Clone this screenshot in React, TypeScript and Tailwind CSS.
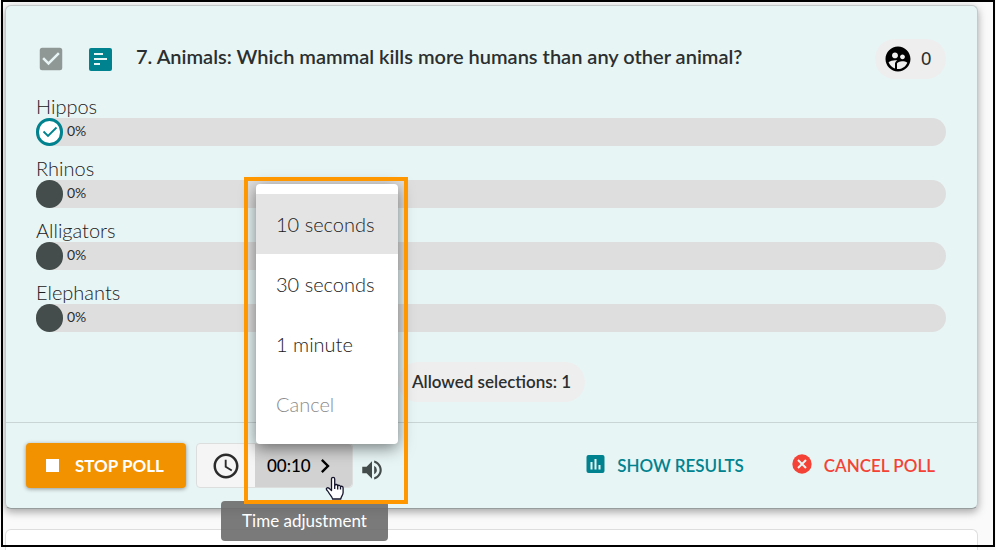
import { useState } from "react";
import {
  MdAccessTime,
  MdCheckBox,
  MdNavigateNext,
  MdSupervisedUserCircle,
  MdVolumeUp,
} from "react-icons/md";

const answers = ["Hippos", "Rhinos", "Alligators", "Elephants"];
const times = ["10 seconds", "30 seconds", "1 minute"];

function PollIcon() {
  return (
    <svg className="ml-[22px]" width="24" height="23" viewBox="0 0 24 23">
      <rect x="1" y="0" width="23" height="23" rx="2" fill="#00838f" />
      <path
        d="M6 6h9M6 11h13M6 16h6"
        stroke="#e8f5f5"
        strokeWidth="2"
        fill="none"
      />
    </svg>
  );
}

function ChartIcon() {
  return (
    <svg className="mr-3 mb-1" width="19" height="18" viewBox="0 0 19 18">
      <rect x="0.500" width="18" height="18" rx="2" fill="#00838f" />
      <path
        d="M5.500 7v7.500M9.500 4v10.500M13.500 10v4.500"
        stroke="#e8f5f5"
        strokeWidth="2"
      />
    </svg>
  );
}

function CancelIcon() {
  return (
    <svg className="mr-3 mb-1" width="20" height="20" viewBox="0 0 20 20">
      <circle cx="10" cy="10" r="9.700" fill="#f44336" />
      <path
        d="M6 6l8 8M14 6l-8 8"
        stroke="#e8f5f5"
        strokeWidth="2"
      />
    </svg>
  );
}

function HandCursor() {
  return (
    <svg width="20" height="25" viewBox="0 0 20 25">
      <path
        d="M6.500 14.500V3c0-2.200 3.200-2.200 3.200 0v6.500c.5-1.500 2.800-1.300 3 .4.700-1 2.600-.8 2.800.8.800-.8 2.600-.4 2.600 1.300v4.500c0 3-2 3.500-2.300 6.500H7.500c-.2-2.400-2.500-4-3.700-6.300-.7-1.400-1.800-2.200-2.300-3-.8-1.500 1-2.500 2.300-1.600z"
        fill="white"
        stroke="#14142b"
        strokeWidth="1.300"
        strokeLinejoin="round"
      />
      <path
        d="M9.700 9.500v3.500M12.700 10v3.500M15.500 11v2.500"
        stroke="#14142b"
        strokeWidth="1.300"
      />
    </svg>
  );
}

export default function App() {
  const [answer, setAnswer] = useState("Hippos");
  const [picked, setPicked] = useState(true);

  return (
    <div className="relative bg-[#fafafa] pt-[5px] pr-[18px] pl-[5px] font-[Lato,sans-serif] text-[#2b2f2f]">
      <main className="rounded-md border border-[#c4c9c9] border-b-[#979c9c] bg-[#e8f5f5] shadow-[0_3px_8px_rgba(0,0,0,0.35)]">
        <header className="flex items-center pt-[33px] pr-[31px] pl-[30px]">
          <label className="flex w-[30px] justify-center text-[#909896]">
            <input
              type="checkbox"
              aria-label="Select poll"
              checked={picked}
              onChange={() => setPicked(!picked)}
              className="sr-only"
            />
            <MdCheckBox size={30} />
          </label>
          <PollIcon />
          <h1 className="ml-6 flex-1 pb-1.5 text-xl leading-6 font-semibold">
            7. Animals: Which mammal kills more humans than any other animal?
          </h1>
          <div className="flex h-10 items-center gap-2 rounded-full bg-[#eee] pr-[15px] pl-2">
            <MdSupervisedUserCircle size={30} color="black" />
            <span className="text-[17px] font-medium">0</span>
          </div>
        </header>

        <section className="mt-[11px] pr-[31px] pl-[30px]">
          {answers.map((name) => (
            <label key={name} className="mb-1.5 block">
              <span className="block h-7 pt-1 text-xl leading-6 font-light text-[#1c2020]">
                {name}
              </span>
              <span className="flex h-7 items-center gap-1 rounded-full bg-[#dedede]">
                <span
                  className={
                    answer === name
                      ? "flex h-7 w-[27px] items-center justify-center rounded-full border-[3px] border-[#00838f] bg-white"
                      : "h-7 w-[27px] rounded-full bg-[#444d4b]"
                  }
                >
                  <input
                    type="radio"
                    name="answer"
                    checked={answer === name}
                    onChange={() => setAnswer(name)}
                    className="sr-only"
                  />
                  {answer === name && (
                    <svg width="16" height="12" viewBox="0 0 16 12">
                      <path
                        d="M1.500 5.500l4.500 4.500 8.500-8.500"
                        stroke="#00838f"
                        strokeWidth="1.800"
                        fill="none"
                      />
                    </svg>
                  )}
                </span>
                <span className="pb-0.5 text-sm">0%</span>
              </span>
            </label>
          ))}
        </section>

        <div className="mt-[30px] flex justify-center">
          <p className="rounded-full bg-[#eee] px-3.5 py-2 text-[17px] leading-6 font-semibold">
            Allowed selections: 1
          </p>
        </div>

        <footer className="mt-5 flex items-center border-t border-[#c9d4d4] px-5 py-5">
          <button className="flex h-[45px] w-40 items-center rounded bg-[#f39200] pl-5 text-[17px] font-bold text-white shadow-[0_1px_4px_rgba(0,0,0,0.4)]">
            <span className="mr-4 size-[13px] bg-white" />
            STOP POLL
          </button>
          <div className="ml-2.5 flex h-[45px] rounded border border-[#dcdede] bg-[#f5f5f5]">
            <button
              aria-label="Timer"
              className="flex w-[58px] items-center justify-center"
            >
              <MdAccessTime size={30} color="#2b2b2b" />
            </button>
            <div className="relative">
              <button className="flex h-full w-[97px] items-center rounded-r bg-[#d2d2d2] pl-3 text-[17px] font-medium text-black">
                00:10
                <MdNavigateNext size={28} />
              </button>
              <div
                role="menu"
                className="absolute bottom-full left-px w-[142px] rounded bg-white py-2.5 text-xl font-light text-[#1c1c1c] shadow-[0_4px_16px_rgba(0,0,0,0.5)]"
              >
                {times.map((time, i) => (
                  <button
                    key={time}
                    role="menuitem"
                    className={`block h-[60px] w-full pl-5 text-left ${i === 0 ? "bg-[#e4e4e4]" : ""}`}
                  >
                    {time}
                  </button>
                ))}
                <button
                  role="menuitem"
                  disabled
                  className="block h-[60px] w-full pl-5 text-left text-[#8c8c8c]"
                >
                  Cancel
                </button>
              </div>
              <div
                role="tooltip"
                className="absolute top-[57px] -left-[34px] h-10 w-[167px] rounded bg-[#6c6c6c]/90 text-center text-[17px] leading-10 text-white"
              >
                Time adjustment
              </div>
              <div className="pointer-events-none absolute -top-[267px] -left-[11px] h-[327px] w-[164px] border-4 border-[#ff9800]" />
              <div className="pointer-events-none absolute top-8 left-[70px]">
                <HandCursor />
              </div>
            </div>
          </div>
          <button aria-label="Sound" className="mt-2 ml-1.5">
            <MdVolumeUp size={26} color="#444b4b" />
          </button>
          <button className="ml-auto flex items-center text-[17px] font-semibold text-[#00838f]">
            <ChartIcon />
            SHOW RESULTS
          </button>
          <button className="mr-[22px] ml-12 flex items-center text-[17px] font-semibold text-[#f44336]">
            <CancelIcon />
            CANCEL POLL
          </button>
        </footer>
      </main>
      <div className="mt-5 h-[21px] rounded-t-md border border-b-0 border-[#dedede] bg-white" />
      <div className="pointer-events-none absolute inset-x-px top-0 bottom-[3px] border-2 border-black" />
    </div>
  );
}
